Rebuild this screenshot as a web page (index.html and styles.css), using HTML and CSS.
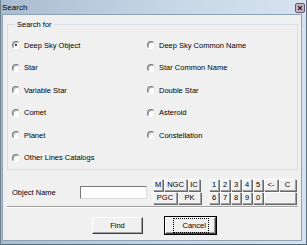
FILE: index.html
```html
<!DOCTYPE html>
<html lang="en">
<head>
  <meta charset="UTF-8">
  <title>Search</title>
  <link rel="stylesheet" href="styles.css">
</head>
<body>
  <div class="window">
    <div class="titlebar">
      <span class="title">Search</span>
      <span class="close">
        <svg width="10" height="10" viewBox="0 0 10 10">
          <rect x="0.5" y="0.5" width="9" height="9" rx="1.5" fill="#c9b7c3" stroke="#6a5566"/>
          <path d="M3 3 L7 7 M7 3 L3 7" stroke="#3a2a36" stroke-width="1.3"/>
        </svg>
      </span>
    </div>

    <div class="client">
      <fieldset class="group">
        <legend>Search for</legend>
        <div class="options">
          <label class="opt"><span class="radio checked"></span>Deep Sky Object</label>
          <label class="opt"><span class="radio"></span>Deep Sky Common Name</label>
          <label class="opt"><span class="radio"></span>Star</label>
          <label class="opt"><span class="radio"></span>Star Common Name</label>
          <label class="opt"><span class="radio"></span>Variable Star</label>
          <label class="opt"><span class="radio"></span>Double Star</label>
          <label class="opt"><span class="radio"></span>Comet</label>
          <label class="opt"><span class="radio"></span>Asteroid</label>
          <label class="opt"><span class="radio"></span>Planet</label>
          <label class="opt"><span class="radio"></span>Constellation</label>
          <label class="opt"><span class="radio"></span>Other Lines Catalogs</label>
        </div>
      </fieldset>

      <div class="name-row">
        <span class="name-label">Object Name</span>
        <input type="text" class="name-input">
        <div class="keys catalogs">
          <div class="key-row">
            <span class="key w-m">M</span>
            <span class="key w-ngc">NGC</span>
            <span class="key w-ic">IC</span>
          </div>
          <div class="key-row">
            <span class="key w-pgc">PGC</span>
            <span class="key w-pk">PK</span>
          </div>
        </div>
        <div class="keys digits">
          <div class="key-row">
            <span class="key w-d">1</span>
            <span class="key w-d">2</span>
            <span class="key w-d">3</span>
            <span class="key w-d">4</span>
            <span class="key w-d">5</span>
            <span class="key w-back">&lt;-</span>
            <span class="key w-c">C</span>
          </div>
          <div class="key-row">
            <span class="key w-d">6</span>
            <span class="key w-d">7</span>
            <span class="key w-d">8</span>
            <span class="key w-d">9</span>
            <span class="key w-d">0</span>
            <span class="key w-blank"></span>
          </div>
        </div>
      </div>

      <div class="separator"></div>

      <div class="actions">
        <button class="btn">Find</button>
        <button class="btn focused"><span>Cancel</span></button>
      </div>
    </div>
  </div>
</body>
</html>
```

FILE: styles.css
```css
body {
  margin: 0;
  font-family: 'Liberation Sans', Arial, sans-serif;
  font-size: 7.5px;
  color: #000;
  background: #fff;
}

.window {
  width: 307px;
  height: 245px;
  box-sizing: border-box;
  border-left: 1px solid #707f8e;
  border-right: 1px solid #5d6e80;
  border-bottom: 1px solid #4f6a7a;
  background: linear-gradient(90deg, #a9bdd1, #c8d8e8 60%, #d6e3ef);
  display: flex;
  flex-direction: column;
}

.titlebar {
  height: 14px;
  display: flex;
  align-items: center;
  justify-content: space-between;
  padding: 0 1px 0 1px;
}

.title {
  font-size: 8px;
  padding-top: 1px;
}

.close {
  display: flex;
  margin-top: 1px;
}

.client {
  flex: 1;
  margin: 0 4px 3px 1px;
  background: #f0f0f0;
  border: 1px solid #8ea2b5;
  display: flex;
  flex-direction: column;
}

.group {
  margin: 5px 3px 0 4px;
  padding: 5px 0 0 4px;
  border: 1px solid #d5dfe5;
  min-width: 0;
}

.group legend {
  padding: 0 2px;
  margin-left: 3px;
  line-height: 9px;
}

.options {
  display: grid;
  grid-template-columns: 135px 1fr;
  grid-auto-rows: 22.5px;
}

.opt {
  display: flex;
  align-items: center;
  gap: 4px;
}

.radio {
  width: 8px;
  height: 8px;
  box-sizing: border-box;
  border-radius: 50%;
  border: 1px solid;
  border-color: #7a7a7a #e8e8e8 #ffffff #7a7a7a;
  background: #fff;
  box-shadow: inset 1px 1px 0 #b0b0b0;
  display: flex;
  align-items: center;
  justify-content: center;
}

.radio.checked::after {
  content: "";
  width: 2px;
  height: 2px;
  border-radius: 50%;
  background: #000;
}

.name-row {
  display: flex;
  align-items: center;
  margin-top: 9px;
  padding-left: 9px;
}

.name-label {
  width: 68px;
}

.name-input {
  width: 67px;
  height: 13px;
  box-sizing: border-box;
  margin: 0;
  padding: 0;
  border: 1px solid;
  border-color: #7a7a7a #dcdcdc #dcdcdc #7a7a7a;
  background: #fff;
}

.keys {
  display: flex;
  flex-direction: column;
  margin-left: 6px;
}

.digits {
  margin-left: 7px;
}

.key-row {
  display: flex;
}

.key {
  height: 12px;
  box-sizing: border-box;
  border: 1px solid;
  border-color: #ffffff #a0a0a0 #a0a0a0 #ffffff;
  box-shadow: 1px 1px 0 #696969;
  margin: 0 1px 1px 0;
  display: flex;
  align-items: center;
  justify-content: center;
  line-height: 1;
}

.w-m { width: 10px; }
.w-ngc { width: 23px; }
.w-ic { width: 12px; }
.w-pgc { width: 24px; }
.w-pk { width: 23px; }
.w-d { width: 10px; }
.w-back { width: 14px; }
.w-c { width: 17px; }
.w-blank { width: 32px; }

.separator {
  margin: 1px 3px 0 4px;
  height: 0;
  border-top: 1px solid #a0a0a0;
  border-bottom: 1px solid #ffffff;
}

.actions {
  display: flex;
  gap: 22px;
  margin-top: 9px;
  padding-left: 89px;
}

.btn {
  width: 51px;
  height: 17px;
  padding: 0;
  font: inherit;
  background: #f0f0f0;
  border: 1px solid;
  border-color: #ffffff #404040 #404040 #ffffff;
  box-shadow: inset -1px -1px 0 #a0a0a0;
  display: flex;
  align-items: center;
  justify-content: center;
}

.btn.focused {
  outline: 1px solid #000;
  outline-offset: 0;
}

.btn.focused span {
  border: 1px dotted #000;
  padding: 2px 9px;
  width: 36px;
  box-sizing: border-box;
  text-align: center;
}
```
